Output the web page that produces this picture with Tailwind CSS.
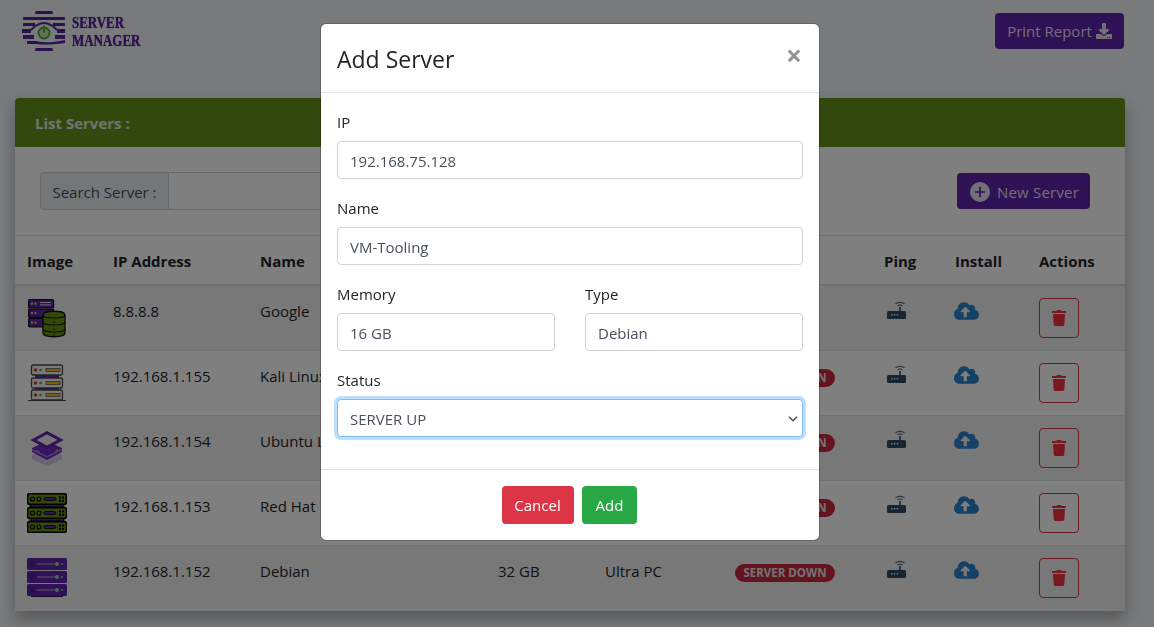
<!DOCTYPE html>
<html lang="en">
<head>
<meta charset="utf-8">
<title>Server Manager</title>
<script src="https://cdn.jsdelivr.net/npm/@tailwindcss/browser@4"></script>
</head>
<body class="font-['Open_Sans','Noto_Sans',sans-serif] text-[15px] leading-6 text-[#212529] bg-[#f3f5f8]">
<svg class="hidden" aria-hidden="true">
  <symbol id="trash" viewBox="0 0 448 512"><path fill="currentColor" d="M432 32H312l-9.4-18.7A24 24 0 0 0 281.1 0H166.8a23.72 23.72 0 0 0-21.4 13.3L136 32H16A16 16 0 0 0 0 48v32a16 16 0 0 0 16 16h416a16 16 0 0 0 16-16V48a16 16 0 0 0-16-16zM53.2 467a48 48 0 0 0 47.9 45h245.8a48 48 0 0 0 47.9-45L416 128H32z"/></symbol>
  <symbol id="cloud" viewBox="0 0 640 512"><path fill="currentColor" d="M537.6 226.6c4.1-10.7 6.4-22.4 6.4-34.6 0-53-43-96-96-96-19.7 0-38.1 6-53.3 16.2C367 64.2 315.3 32 256 32c-88.4 0-160 71.6-160 160 0 2.7.1 5.4.2 8.1C40.2 219.8 0 273.2 0 336c0 79.5 64.5 144 144 144h368c70.7 0 128-57.3 128-128 0-61.9-44-113.6-102.4-125.4zM393.4 288H328v112c0 8.8-7.2 16-16 16h-48c-8.8 0-16-7.2-16-16V288h-65.4c-14.3 0-21.4-17.2-11.3-27.3l105.4-105.4c6.2-6.2 16.4-6.2 22.6 0l105.4 105.4c10.1 10.1 2.9 27.3-11.3 27.3z"/></symbol>
  <symbol id="router" viewBox="0 0 19 18">
    <path fill="none" stroke="currentColor" stroke-width="1" d="M8.500 2.600Q13 -0.400 17.500 2.600M10.500 4.700Q13 3.100 15.500 4.700"/>
    <rect x="12.200" y="6" width="1.600" height="4.500" fill="currentColor"/>
    <rect x="0" y="10" width="19" height="8" rx="1.500" fill="currentColor"/>
    <rect x="4" y="13" width="1.500" height="1.500" fill="#dfe6ee"/><rect x="6.800" y="13" width="1.500" height="1.500" fill="#dfe6ee"/><rect x="9.600" y="13" width="1.500" height="1.500" fill="#dfe6ee"/>
  </symbol>
  <symbol id="srv-db" viewBox="0 0 40 40">
    <g fill="#5f22aa" stroke="#111" stroke-width="1.2"><rect x="1.600" y="1.600" width="25" height="8.400" rx="1"/><rect x="1.600" y="11" width="25" height="8.400" rx="1"/><rect x="1.600" y="20.400" width="25" height="8.400" rx="1"/></g>
    <g fill="#e8c860"><rect x="4" y="4.600" width="2" height="2"/><rect x="7.500" y="4.600" width="2" height="2"/><rect x="4" y="14" width="2" height="2"/><rect x="7.500" y="14" width="2" height="2"/><rect x="4" y="23.500" width="2" height="2"/><rect x="7.500" y="23.500" width="2" height="2"/></g>
    <g fill="#ddd"><rect x="13" y="4" width="11" height="1"/><rect x="13" y="6.400" width="11" height="1"/></g>
    <path fill="#66940f" stroke="#111" stroke-width="1.300" d="M16 17c0-5 22-5 22 0v18c0 5-22 5-22 0z"/>
    <path fill="none" stroke="#111" stroke-width="1.200" d="M16 17c0 4 22 4 22 0M16 24c0 4 22 4 22 0M16 31c0 4 22 4 22 0"/>
    <g fill="#111"><circle cx="27" cy="24.500" r=".7"/><circle cx="27" cy="31.500" r=".7"/><circle cx="27" cy="37" r=".7"/></g>
  </symbol>
  <symbol id="srv-light" viewBox="0 0 40 40">
    <g fill="#5f22aa"><rect x="8" y="12" width="24" height="3"/><rect x="8" y="25" width="24" height="3"/></g>
    <g fill="#f3f3f3" stroke="#4a4a4a" stroke-width="1.300"><rect x="4.500" y="2" width="31" height="10" rx="1.500"/><rect x="4.500" y="15" width="31" height="10" rx="1.500"/><rect x="4.500" y="27" width="31" height="10" rx="1.500"/></g>
    <g fill="#d8352a"><circle cx="8.500" cy="7" r="1.700"/><circle cx="8.500" cy="20" r="1.700"/><circle cx="8.500" cy="32" r="1.700"/></g>
    <g fill="#3fa34d"><circle cx="13.500" cy="7" r="1.300"/><circle cx="13.500" cy="20" r="1.300"/><circle cx="13.500" cy="32" r="1.300"/></g>
    <g fill="#f0bc2e" stroke="#4a4a4a" stroke-width=".7"><rect x="19" y="5.500" width="14" height="3"/><rect x="19" y="18.500" width="14" height="3"/><rect x="19" y="30.500" width="14" height="3"/></g>
    <rect x="1" y="37" width="38" height="1" fill="#4a4a4a"/>
  </symbol>
  <symbol id="srv-stack" viewBox="0 0 40 40">
    <path fill="#d3c6e8" d="M20 20 35 27v4L20 38 5 31v-4z"/>
    <path fill="#6b2fbe" d="M5 20 20 13l15 7v4L20 32 5 24z"/>
    <path fill="#a77ae0" d="M5 21 20 28l15-7v1.500L20 29.500 5 22.500z"/>
    <path fill="#f0b848" d="M10 22l3 1.500-.6.8-3-1.500zM28 23l3-1.500.6.8-3 1.500z"/>
    <path fill="#ece6f5" stroke="#5f22aa" stroke-width="3" d="M6.500 12 20 4.700 33.500 12 20 19.300z"/>
  </symbol>
  <symbol id="srv-green" viewBox="0 0 40 40">
    <rect x="3" y="10" width="34" height="4" fill="#5f22aa" stroke="#000"/><rect x="3" y="24" width="34" height="4" fill="#5f22aa" stroke="#000"/>
    <g fill="#66940f" stroke="#000" stroke-width="1.400"><rect x=".7" y=".7" width="38.600" height="10.600" rx="1"/><rect x=".7" y="14.700" width="38.600" height="10.600" rx="1"/><rect x=".7" y="28.700" width="38.600" height="10.600" rx="1"/></g>
    <g fill="none" stroke="#000" stroke-width="1.100"><circle cx="5.500" cy="6" r="2"/><circle cx="12" cy="6" r="2"/><circle cx="5.500" cy="20" r="2"/><circle cx="12" cy="20" r="2"/><circle cx="5.500" cy="34" r="2"/><circle cx="12" cy="34" r="2"/></g>
    <g fill="#5f22aa" stroke="#000" stroke-width=".8"><rect x="17" y="4.500" width="12" height="3" rx="1.500"/><rect x="17" y="18.500" width="12" height="3" rx="1.500"/><rect x="17" y="32.500" width="12" height="3" rx="1.500"/></g>
    <g fill="#000"><rect x="32" y="3.500" width="2" height="2"/><rect x="35" y="3.500" width="2" height="2"/><rect x="32" y="6.800" width="2" height="2"/><rect x="35" y="6.800" width="2" height="2"/><rect x="32" y="17.500" width="2" height="2"/><rect x="35" y="17.500" width="2" height="2"/><rect x="32" y="20.800" width="2" height="2"/><rect x="35" y="20.800" width="2" height="2"/><rect x="32" y="31.500" width="2" height="2"/><rect x="35" y="31.500" width="2" height="2"/><rect x="32" y="34.800" width="2" height="2"/><rect x="35" y="34.800" width="2" height="2"/></g>
  </symbol>
  <symbol id="srv-purple" viewBox="0 0 40 40">
    <rect x="4" y="36" width="32" height="3" fill="#2a1250"/>
    <g fill="#5f22aa"><rect x="0" y="0" width="40" height="12" rx="1.500"/><rect x="0" y="13" width="40" height="12" rx="1.500"/><rect x="0" y="26" width="40" height="12" rx="1.500"/></g>
    <g fill="#a99ac4"><rect x="10" y="5.400" width="20" height="1.200"/><rect x="10" y="18.400" width="20" height="1.200"/><rect x="10" y="31.400" width="20" height="1.200"/></g>
    <g fill="#4d1c8c"><rect x="3" y="3.500" width="4" height="5"/><rect x="3" y="16.500" width="4" height="5"/><rect x="3" y="29.500" width="4" height="5"/></g>
    <g fill="#8fd8a8"><circle cx="30" cy="6" r="2"/><circle cx="30" cy="19" r="2"/><circle cx="30" cy="32" r="2"/><circle cx="35" cy="6" r="1"/><circle cx="35" cy="19" r="1"/><circle cx="35" cy="32" r="1"/></g>
  </symbol>
</svg>

<div class="w-[1140px] h-[627px] overflow-hidden">
  <header class="h-[98px] px-[15px] flex justify-between items-start">
    <div class="flex items-start ml-[7px] mt-[10px] gap-[6px] blur-[0.4px]">
      <svg width="44" height="43" viewBox="0 0 44 43" class="shrink-0">
        <g fill="#55259a">
          <rect x="13" y="1" width="18" height="3" rx="1.500"/><rect x="1" y="7" width="42" height="3" rx="1"/><rect x="1" y="13" width="12" height="3"/><rect x="31" y="13" width="12" height="3"/><rect x="0" y="19" width="9" height="4"/><rect x="35" y="19" width="8" height="4"/><rect x="1" y="25" width="11" height="4"/><rect x="33" y="25" width="10" height="4"/><path d="M5 31h9q10 3 29-1v3q-20 2.500-29 1H5z"/><rect x="13" y="38" width="18" height="3" rx="1.500"/>
        </g>
        <path fill="none" stroke="#55259a" stroke-width="2" d="M9 20Q22 6 35 20"/>
        <circle cx="22" cy="23" r="5.500" fill="#8bb04c" fill-opacity=".35" stroke="#4caf2a" stroke-width="2"/>
        <path fill="none" stroke="#4caf2a" stroke-width="2" d="M22 15.500v7"/>
      </svg>
      <div class="origin-left scale-x-[0.81] font-['Liberation_Serif',serif] font-bold text-[16px] leading-[18px] text-[#55259a] mt-[4px] [text-shadow:0_0_1px_#55259a]">SERVER<br>MANAGER</div>
    </div>
    <button class="mt-[13px] mr-px h-9 w-[129px] rounded bg-[#5f22aa] text-[#e6dff0] flex items-center justify-center gap-[4px]">Print Report
      <svg width="16" height="16" viewBox="0 0 512 512"><path fill="currentColor" d="M216 0h80c13.300 0 24 10.700 24 24v168h87.700c17.800 0 26.700 21.500 14.100 34.100L269.700 378.300c-7.500 7.500-19.800 7.500-27.300 0L90.100 226.100c-12.600-12.600-3.700-34.100 14.100-34.100H192V24c0-13.300 10.700-24 24-24zm296 376v112c0 13.300-10.700 24-24 24H24c-13.300 0-24-10.700-24-24V376c0-13.300 10.700-24 24-24h146.700l49 49c20.100 20.100 52.500 20.100 72.600 0l49-49H488c13.300 0 24 10.700 24 24zm-124 88c0-11-9-20-20-20s-20 9-20 20 9 20 20 20 20-9 20-20zm64 0c0-11-9-20-20-20s-20 9-20 20 9 20 20 20 20-9 20-20z"/></svg>
    </button>
  </header>

  <section class="mx-[15px] bg-white rounded-t shadow-[0_8px_16px_rgba(0,0,0,0.3)]">
    <h2 class="h-[49px] px-5 flex items-center rounded-t bg-[#669018] text-[#e6e6e6] font-bold text-[15px]">List Servers :</h2>
    <div class="h-[88px] pl-[25px] pr-[35px] pt-[25px] flex justify-between items-start">
      <div class="flex">
        <span class="h-[38px] w-[129px] pt-px flex items-center justify-center rounded-l bg-[#e9ecef] border border-[#ced4da] text-[#495057]">Search Server :</span>
        <input aria-label="Search Server" class="h-[38px] w-[400px] border border-l-0 border-[#ced4da] rounded-r bg-white">
      </div>
      <button class="mt-px h-9 w-[133px] pt-px pl-[2px] rounded bg-[#5f22aa] text-[#e6dff0] flex items-center justify-center gap-[7px] tracking-[0.2px]">
        <svg width="20" height="20" viewBox="0 0 20 20"><circle cx="10" cy="10" r="10" fill="currentColor"/><path stroke="#5f22aa" stroke-width="1.700" d="M10 5v10M5 10h10"/></svg>New Server
      </button>
    </div>
    <table class="w-[1110px] table-fixed border-collapse">
      <colgroup><col class="w-[86px]"><col class="w-[147px]"><col class="w-[238px]"><col class="w-[107px]"><col class="w-[130px]"><col class="w-[149px]"><col class="w-[71px]"><col class="w-[84px]"><col class="w-[98px]"></colgroup>
      <thead>
        <tr class="h-[49px] border-t border-b-2 border-[#dee2e6] text-left font-bold">
          <th class="px-3 pt-[3px]">Image</th><th class="px-3 pt-[3px]">IP Address</th><th class="px-3 pt-[3px]">Name</th><th class="px-3 pt-[3px]">Memory</th><th class="px-3 pt-[3px]">Type</th><th class="px-3 pt-[3px]">Status</th><th class="px-3 pt-[3px]">Ping</th><th class="px-3 pt-[3px]">Install</th><th class="px-3 pt-[3px]">Actions</th>
        </tr>
      </thead>
      <tbody>
        <tr class="h-[66px] bg-[#f1f1f1] align-top">
          <td class="pl-3 pt-3"><svg width="40" height="40"><use href="#srv-db"/></svg></td><td class="px-3 pt-[13px]">8.8.8.8</td><td class="px-3 pt-[13px]">Google</td><td></td><td></td><td></td>
          <td class="pl-[15px] pt-[15px]"><svg width="19" height="18" class="text-[#2f4a66]"><use href="#router"/></svg></td>
          <td class="pl-[11px] pt-[15px]"><svg width="25" height="20" class="text-[#2a82cf]"><use href="#cloud"/></svg></td>
          <td class="px-3 pt-3"><button aria-label="Delete" class="w-10 h-10 border border-[#dc3545] rounded flex items-center justify-center text-[#f0303f]"><svg width="14" height="16"><use href="#trash"/></svg></button></td>
        </tr>
        <tr class="h-[65px] border-t border-[#dee2e6] align-top">
          <td class="pl-3 pt-3"><svg width="40" height="40"><use href="#srv-light"/></svg></td><td class="px-3 pt-[13px]">192.168.1.155</td><td class="px-3 pt-[13px] whitespace-nowrap">Kali Linux</td><td></td><td></td>
          <td class="px-3 pt-[13px]"><span class="inline-block h-[18px] w-[100px] mt-[5px] rounded-full bg-[#c8283e] text-[#e6e6e6] text-center text-[11.500px] leading-[18px] font-bold">SERVER DOWN</span></td>
          <td class="pl-[15px] pt-[14px]"><svg width="19" height="18" class="text-[#2f4a66]"><use href="#router"/></svg></td>
          <td class="pl-[11px] pt-[14px]"><svg width="25" height="20" class="text-[#2a82cf]"><use href="#cloud"/></svg></td>
          <td class="px-3 pt-3"><button aria-label="Delete" class="w-10 h-10 border border-[#dc3545] rounded flex items-center justify-center text-[#f0303f]"><svg width="14" height="16"><use href="#trash"/></svg></button></td>
        </tr>
        <tr class="h-[65px] bg-[#f1f1f1] border-t border-[#dee2e6] align-top">
          <td class="pl-3 pt-3"><svg width="40" height="40"><use href="#srv-stack"/></svg></td><td class="px-3 pt-[13px]">192.168.1.154</td><td class="px-3 pt-[13px] whitespace-nowrap">Ubuntu Linux</td><td></td><td></td>
          <td class="px-3 pt-[13px]"><span class="inline-block h-[18px] w-[100px] mt-[5px] rounded-full bg-[#c8283e] text-[#e6e6e6] text-center text-[11.500px] leading-[18px] font-bold">SERVER DOWN</span></td>
          <td class="pl-[15px] pt-[14px]"><svg width="19" height="18" class="text-[#2f4a66]"><use href="#router"/></svg></td>
          <td class="pl-[11px] pt-[14px]"><svg width="25" height="20" class="text-[#2a82cf]"><use href="#cloud"/></svg></td>
          <td class="px-3 pt-3"><button aria-label="Delete" class="w-10 h-10 border border-[#dc3545] rounded flex items-center justify-center text-[#f0303f]"><svg width="14" height="16"><use href="#trash"/></svg></button></td>
        </tr>
        <tr class="h-[65px] border-t border-[#dee2e6] align-top">
          <td class="pl-3 pt-3"><svg width="40" height="40"><use href="#srv-green"/></svg></td><td class="px-3 pt-[13px]">192.168.1.153</td><td class="px-3 pt-[13px]">Red Hat</td><td></td><td></td>
          <td class="px-3 pt-[13px]"><span class="inline-block h-[18px] w-[100px] mt-[5px] rounded-full bg-[#c8283e] text-[#e6e6e6] text-center text-[11.500px] leading-[18px] font-bold">SERVER DOWN</span></td>
          <td class="pl-[15px] pt-[14px]"><svg width="19" height="18" class="text-[#2f4a66]"><use href="#router"/></svg></td>
          <td class="pl-[11px] pt-[14px]"><svg width="25" height="20" class="text-[#2a82cf]"><use href="#cloud"/></svg></td>
          <td class="px-3 pt-3"><button aria-label="Delete" class="w-10 h-10 border border-[#dc3545] rounded flex items-center justify-center text-[#f0303f]"><svg width="14" height="16"><use href="#trash"/></svg></button></td>
        </tr>
        <tr class="h-[65px] bg-[#f1f1f1] border-t border-[#dee2e6] align-top">
          <td class="pl-3 pt-3"><svg width="40" height="40"><use href="#srv-purple"/></svg></td><td class="px-3 pt-[13px]">192.168.1.152</td><td class="px-3 pt-[13px]">Debian</td><td class="px-3 pt-[13px]">32 GB</td><td class="px-3 pt-[13px]">Ultra PC</td>
          <td class="px-3 pt-[13px]"><span class="inline-block h-[18px] w-[100px] mt-[5px] rounded-full bg-[#c8283e] text-[#e6e6e6] text-center text-[11.500px] leading-[18px] font-bold">SERVER DOWN</span></td>
          <td class="pl-[15px] pt-[14px]"><svg width="19" height="18" class="text-[#2f4a66]"><use href="#router"/></svg></td>
          <td class="pl-[11px] pt-[14px]"><svg width="25" height="20" class="text-[#2a82cf]"><use href="#cloud"/></svg></td>
          <td class="px-3 pt-3"><button aria-label="Delete" class="w-10 h-10 border border-[#dc3545] rounded flex items-center justify-center text-[#f0303f]"><svg width="14" height="16"><use href="#trash"/></svg></button></td>
        </tr>
      </tbody>
    </table>
  </section>
</div>

<div class="fixed inset-0 bg-black/50 overflow-hidden">
  <div class="w-[500px] ml-[320px] mt-[23px] bg-white rounded-md border border-black/20 bg-clip-padding">
    <div class="h-[69px] px-4 flex justify-between border-b border-[#dee2e6]">
      <h3 class="text-[23px] leading-9 mt-[17px]">Add Server</h3>
      <span class="text-[28px] leading-6 font-bold text-[#212529]/50 mt-[19px] mr-[1px]">×</span>
    </div>
    <form class="px-4 pt-[17px] pb-[32px] flex flex-col gap-[17px] text-[#212529]">
      <div><label class="block h-6 mb-[7px]">IP</label><input class="w-full h-[38px] px-3 pt-px rounded border border-[#ced4da] text-[#495057]" value="192.168.75.128"></div>
      <div><label class="block h-6 mb-[7px]">Name</label><input class="w-full h-[38px] px-3 pt-px rounded border border-[#ced4da] text-[#495057]" value="VM-Tooling"></div>
      <div class="grid grid-cols-2 gap-[30px]">
        <div><label class="block h-6 mb-[7px]">Memory</label><input class="w-full h-[38px] px-3 pt-px rounded border border-[#ced4da] text-[#495057]" value="16 GB"></div>
        <div><label class="block h-6 mb-[7px]">Type</label><input class="w-full h-[38px] px-3 pt-px rounded border border-[#ced4da] text-[#495057]" value="Debian"></div>
      </div>
      <div><label class="block h-6 mb-[7px]">Status</label>
        <div class="relative">
          <select class="appearance-none w-full h-[38px] px-3 pt-px rounded border border-[#80bdff] bg-white text-[#495057] shadow-[0_0_0_3px_rgba(0,123,255,0.25)]"><option>SERVER UP</option><option>SERVER DOWN</option></select>
          <svg class="absolute right-[5px] top-[17px] pointer-events-none" width="10" height="6" viewBox="0 0 10 6"><path fill="none" stroke="#495057" stroke-width="1.500" d="M1 .8l4 4 4-4"/></svg>
        </div>
      </div>
    </form>
    <div class="h-[71px] border-t border-[#dee2e6] flex justify-center gap-2 pt-4 pr-[2px]">
      <button class="h-[38px] w-[72px] rounded bg-[#dc3545] text-white">Cancel</button>
      <button class="h-[38px] w-[55px] pl-px rounded bg-[#28a745] text-white">Add</button>
    </div>
  </div>
</div>
</body>
</html>
